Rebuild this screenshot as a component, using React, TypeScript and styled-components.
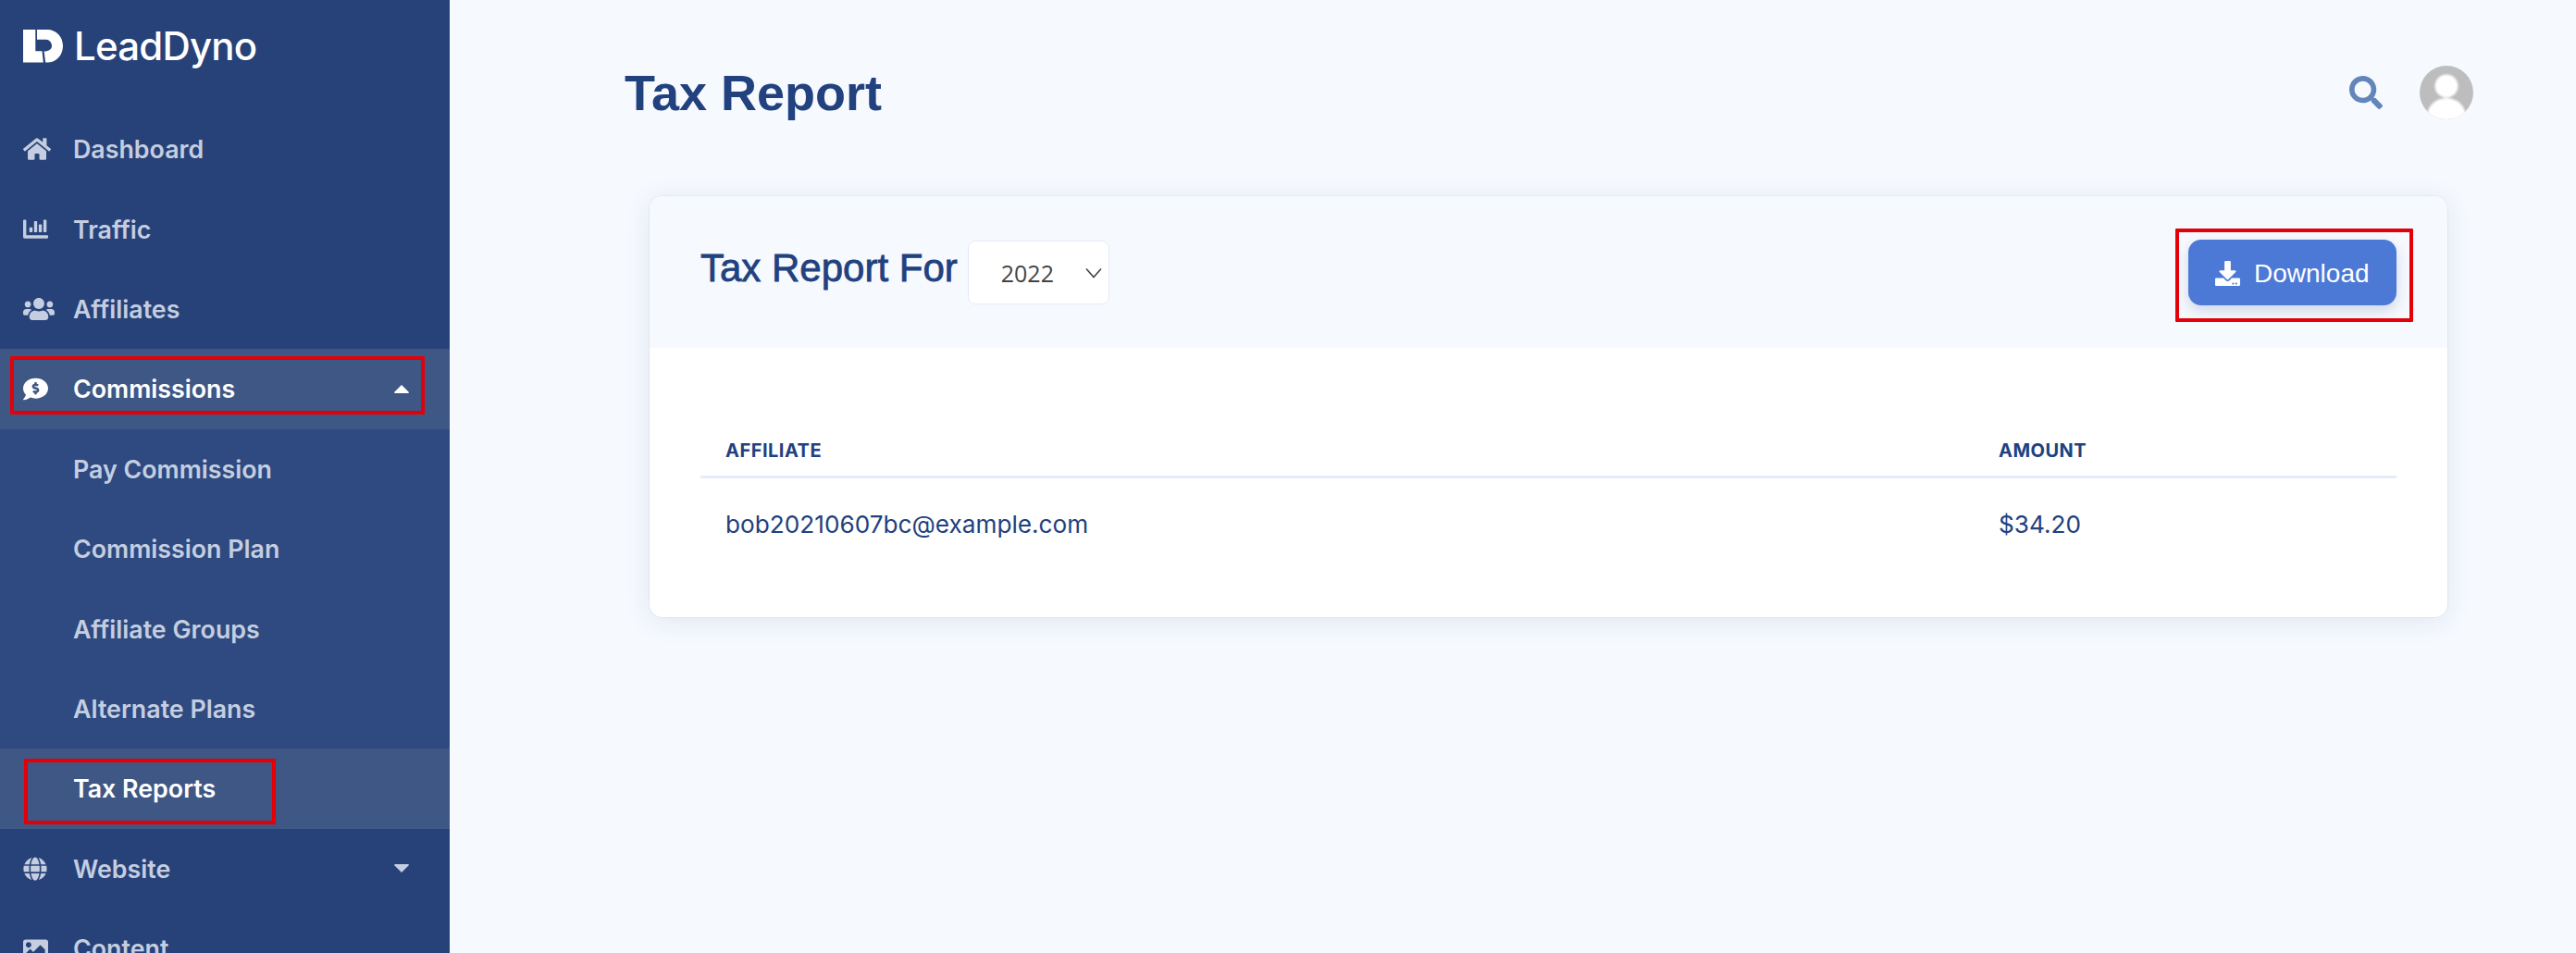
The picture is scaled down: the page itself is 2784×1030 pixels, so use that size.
import React from "react";
import styled, { createGlobalStyle } from "styled-components";
import {
  FaChartBar,
  FaCommentDollar,
  FaDownload,
  FaGlobe,
  FaHome,
  FaImage,
  FaSearch,
  FaUsers,
} from "react-icons/fa";

const GlobalStyle = createGlobalStyle`
  html, body {
    margin: 0;
    height: 100%;
    overflow: hidden;
    background: #f6f9fe;
  }
  * {
    box-sizing: border-box;
  }
`;

const Page = styled.div`
  position: relative;
  display: flex;
  width: 2784px;
  height: 1030px;
  overflow: hidden;
  font-family: Inter, "Liberation Sans", sans-serif;
`;

const Sidebar = styled.nav`
  flex: 0 0 486px;
  height: 1030px;
  overflow: hidden;
  background: #274279;
`;

const Brand = styled.div`
  display: flex;
  align-items: center;
  gap: 12px;
  height: 118px;
  padding: 0 0 18px 25px;
  color: #fff;
`;

const BrandName = styled.span`
  font-size: 42px;
  font-weight: 500;
  letter-spacing: -0.8px;
  line-height: 1;
`;

const NavRow = styled.div<{ $active?: boolean; $sub?: boolean }>`
  display: flex;
  align-items: center;
  height: 86.4px;
  padding: 0 44px 0 25px;
  color: ${(p) => (p.$active ? "#fff" : "#c5cee0")};
  background: ${(p) => (p.$active ? "#3f5785" : p.$sub ? "#2e4a80" : "transparent")};
  font-size: 26.8px;
  font-weight: 600;
`;

const NavIcon = styled.span<{ $size: number }>`
  display: flex;
  align-items: center;
  flex: 0 0 54px;
  font-size: ${(p) => p.$size}px;
`;

const NavLabel = styled.span<{ $sub?: boolean }>`
  flex: 1;
  margin-left: ${(p) => (p.$sub ? "54px" : "0")};
`;

const Caret = styled.svg`
  display: block;
  width: 16px;
  height: 9px;
  fill: currentColor;
`;

const Annotation = styled.div<{ $x: number; $y: number; $w: number; $h: number }>`
  position: absolute;
  left: ${(p) => p.$x}px;
  top: ${(p) => p.$y}px;
  width: ${(p) => p.$w}px;
  height: ${(p) => p.$h}px;
  border: 4px solid #e30008;
  border-radius: 1px;
  pointer-events: none;
`;

const Main = styled.main`
  flex: 1;
  padding: 0 111px 0 189px;
  background: #f6f9fe;
`;

const TopBar = styled.header`
  display: flex;
  align-items: center;
  justify-content: space-between;
  height: 200px;
`;

const PageTitle = styled.h1`
  margin: 0;
  color: #21417f;
  font-family: "Liberation Sans", Arial, sans-serif;
  font-size: 54px;
  font-weight: 700;
  line-height: 1;
`;

const TopActions = styled.div`
  display: flex;
  align-items: center;
  gap: 40px;
  color: #6485bb;
  font-size: 36px;
`;

const SearchIcon = styled(FaSearch)`
  display: block;
`;

const Avatar = styled.svg`
  display: block;
  width: 58px;
  height: 58px;
  border-radius: 50%;
`;

const AvatarFigure = styled.g`
  fill: #fff;
  filter: blur(0.8px);
`;

const Card = styled.section`
  margin: 12px 28px 0 27px;
  height: 455px;
  border-radius: 14px;
  overflow: hidden;
  background: #fff;
  box-shadow: 0 0 0 1px rgba(33, 65, 127, 0.05), 0 4px 28px rgba(33, 65, 127, 0.1);
`;

const CardHeader = styled.div`
  display: flex;
  align-items: center;
  justify-content: space-between;
  height: 164px;
  padding: 0 55px;
  background: #f6f9fe;
`;

const CardTitleGroup = styled.div`
  display: flex;
  align-items: center;
  gap: 11px;
`;

const CardTitle = styled.h2`
  margin: 0 0 8px;
  color: #21417f;
  font-family: "Liberation Sans", Arial, sans-serif;
  font-size: 42px;
  font-weight: 400;
  -webkit-text-stroke: 0.8px #21417f;
  line-height: 1;
`;

const YearSelect = styled.div`
  display: flex;
  align-items: center;
  justify-content: space-between;
  width: 153px;
  height: 69px;
  padding: 2px 7px 0 35px;
  border: 1px solid #e4ebf8;
  border-radius: 8px;
  background: #fff;
  color: #444;
  font-family: "Open Sans", sans-serif;
  font-size: 25px;
`;

const Chevron = styled.svg`
  display: block;
  width: 18px;
  height: 12px;
  fill: none;
  stroke: #444;
  stroke-width: 1.6;
`;

const DownloadButton = styled.button`
  display: flex;
  align-items: center;
  gap: 15px;
  width: 225px;
  height: 71px;
  padding: 3px 0 0 29px;
  border: 0;
  border-radius: 14px;
  background: #4c78d6;
  color: #fff;
  font-family: "Liberation Sans", Arial, sans-serif;
  font-size: 28px;
  box-shadow: 0 6px 14px rgba(33, 65, 127, 0.18);

  & > svg {
    width: 27px;
    height: 27px;
  }
`;

const CardBody = styled.div`
  padding: 0 55px;
`;

const Table = styled.table`
  width: 100%;
  border-collapse: collapse;
  table-layout: fixed;
  color: #21417f;
`;

const HeadCell = styled.th<{ $width?: string }>`
  width: ${(p) => p.$width ?? "auto"};
  height: 139px;
  padding: 85px 0 0 27px;
  border-bottom: 3px solid #e4ebf9;
  font-size: 20px;
  font-weight: 700;
  letter-spacing: 0.5px;
  text-align: left;
  text-transform: uppercase;
`;

const BodyCell = styled.td`
  height: 95px;
  padding: 6px 0 0 27px;
  font-size: 26.2px;
  font-weight: 400;
`;

const navTop = [
  { label: "Dashboard", icon: <FaHome />, size: 30 },
  { label: "Traffic", icon: <FaChartBar />, size: 27 },
  { label: "Affiliates", icon: <FaUsers />, size: 34 },
];

const subNav = ["Pay Commission", "Commission Plan", "Affiliate Groups", "Alternate Plans"];

function CaretIcon({ up }: { up?: boolean }) {
  return (
    <Caret viewBox="0 0 16 9">
      <path
        d={up ? "M8 0 16 8 15.4 9H.6L0 8Z" : "M.6 0H15.4L16 1 8 9 0 1Z"}
      />
    </Caret>
  );
}

function App() {
  return (
    <Page>
      <GlobalStyle />
      <Sidebar>
        <Brand>
          <svg width="43" height="36" viewBox="0 0 43 36" fill="#fff">
            <path d="M0 0H13.3V23.3H20.5L21.8 35.5H0Z" />
            <path d="M15 0H26C36 0 43 8 43 17.7S36 35.5 26 35.5H24.2L22.6 23.5C28 23.5 31 21 31 17.5S28 10.7 25 10.7H15Z" />
          </svg>
          <BrandName>LeadDyno</BrandName>
        </Brand>
        {navTop.map((item) => (
          <NavRow key={item.label}>
            <NavIcon $size={item.size}>{item.icon}</NavIcon>
            <NavLabel>{item.label}</NavLabel>
          </NavRow>
        ))}
        <NavRow $active>
          <NavIcon $size={27}>
            <FaCommentDollar />
          </NavIcon>
          <NavLabel>Commissions</NavLabel>
          <CaretIcon up />
        </NavRow>
        {subNav.map((label) => (
          <NavRow key={label} $sub>
            <NavLabel $sub>{label}</NavLabel>
          </NavRow>
        ))}
        <NavRow $active>
          <NavLabel $sub>Tax Reports</NavLabel>
        </NavRow>
        <NavRow>
          <NavIcon $size={26}>
            <FaGlobe />
          </NavIcon>
          <NavLabel>Website</NavLabel>
          <CaretIcon />
        </NavRow>
        <NavRow>
          <NavIcon $size={27}>
            <FaImage />
          </NavIcon>
          <NavLabel>Content</NavLabel>
        </NavRow>
      </Sidebar>
      <Main>
        <TopBar>
          <PageTitle>Tax Report</PageTitle>
          <TopActions>
            <SearchIcon />
            <Avatar viewBox="0 0 58 58">
              <rect width="58" height="58" fill="#bdbdbd" />
              <AvatarFigure>
                <circle cx="29" cy="22" r="12.5" />
                <ellipse cx="29" cy="55" rx="21" ry="20" />
              </AvatarFigure>
            </Avatar>
          </TopActions>
        </TopBar>
        <Card>
          <CardHeader>
            <CardTitleGroup>
              <CardTitle>Tax Report For</CardTitle>
              <YearSelect>
                2022
                <Chevron viewBox="0 0 18 12">
                  <path d="M1 1.5 9 10.5 17 1.5" />
                </Chevron>
              </YearSelect>
            </CardTitleGroup>
            <DownloadButton>
              <FaDownload />
              Download
            </DownloadButton>
          </CardHeader>
          <CardBody>
            <Table>
              <thead>
                <tr>
                  <HeadCell $width="1376px">Affiliate</HeadCell>
                  <HeadCell>Amount</HeadCell>
                </tr>
              </thead>
              <tbody>
                <tr>
                  <BodyCell>bob20210607bc@example.com</BodyCell>
                  <BodyCell>$34.20</BodyCell>
                </tr>
              </tbody>
            </Table>
          </CardBody>
        </Card>
      </Main>
      <Annotation $x={11} $y={385} $w={448} $h={63} />
      <Annotation $x={26} $y={820} $w={272} $h={71} />
      <Annotation $x={2351} $y={247} $w={257} $h={101} />
    </Page>
  );
}

export default App;
